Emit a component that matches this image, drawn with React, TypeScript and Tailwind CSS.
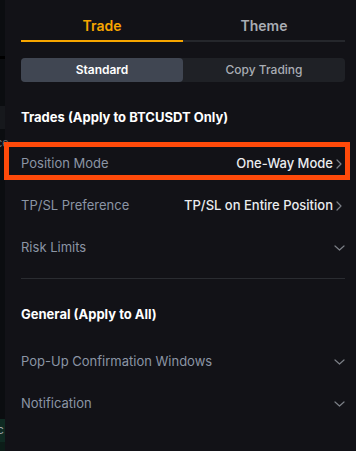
import React from "react";

const font = { fontFamily: "Inter, 'Noto Sans', Roboto, sans-serif" };

function ChevronRight() {
  return (
    <svg width="6" height="10" viewBox="0 0 6 10" fill="none" className="ml-[3px] mr-[3px]">
      <path d="M1 1l4 4-4 4" stroke="#7b7f86" strokeWidth="1.2" strokeLinecap="round" strokeLinejoin="round" />
    </svg>
  );
}

function ChevronDown() {
  return (
    <svg width="11" height="6" viewBox="0 0 11 6" fill="none">
      <path d="M1 1l4.5 4 4.5-4" stroke="#7b7f86" strokeWidth="1.2" strokeLinecap="round" strokeLinejoin="round" />
    </svg>
  );
}

function Row({ label, value, down }: { label: string; value?: string; down?: boolean }) {
  return (
    <div className="flex h-[42px] items-center justify-between">
      <span className="text-[13px] text-[#8b95a5]">{label}</span>
      {down ? (
        <ChevronDown />
      ) : (
        <span className="flex items-center text-[13px] font-medium text-[#eaecef]">
          {value}
          <ChevronRight />
        </span>
      )}
    </div>
  );
}

export default function App() {
  return (
    <div className="relative flex h-[451px] w-[356px] overflow-hidden bg-[#121217]" style={font}>
      {/* background page strip */}
      <div className="relative w-[5px] shrink-0 bg-[#0b0d10]">
        <div className="absolute left-0 top-[56px] h-[3px] w-full bg-[#000000]" />
        <div className="absolute left-0 top-[106px] h-[23px] w-full bg-[#16181c]" />
        <div className="absolute left-[-4px] top-[136px] text-[11px] leading-[14px] text-[#6b6f75]">ce</div>
        <div className="absolute left-0 top-[419px] h-[23px] w-full overflow-hidden bg-[#0f2a22]">
          <div className="absolute left-[-3px] top-[4px] text-[12px] leading-[14px] text-[#9aa0a6]">c</div>
        </div>
        <div className="absolute left-0 top-[442px] h-[9px] w-full bg-[#0c1d18]" />
      </div>

      {/* panel */}
      <div className="flex flex-1 flex-col pl-4 pr-[11px]">
        {/* tabs */}
        <div className="flex">
          <div className="flex flex-1 justify-center border-b-2 border-[#f7a600] pb-[5px] pt-[17px]">
            <span className="text-[14px] font-semibold leading-[18px] text-[#f7a600]">Trade</span>
          </div>
          <div className="flex flex-1 justify-center border-b-2 border-[#25272c] pb-[5px] pt-[17px]">
            <span className="text-[14px] font-semibold leading-[18px] text-[#a9adb4]">Theme</span>
          </div>
        </div>

        {/* segmented */}
        <div className="mt-[16px] flex h-[24px] rounded-[4px] bg-[#1f2126]">
          <div className="flex flex-1 items-center justify-center rounded-[4px] bg-[#404652] text-[12px] font-semibold text-[#ffffff]">
            Standard
          </div>
          <div className="flex flex-1 items-center justify-center text-[12px] font-medium text-[#a9adb4]">
            Copy Trading
          </div>
        </div>

        {/* section 1 */}
        <div className="mt-[18px] flex h-[36px] items-center text-[13px] font-bold text-[#ffffff]">
          Trades (Apply to BTCUSDT Only)
        </div>
        <div className="mt-[7px]">
          <Row label="Position Mode" value="One-Way Mode" />
          <Row label="TP/SL Preference" value="TP/SL on Entire Position" />
          <Row label="Risk Limits" down />
        </div>

        <div className="mt-[9px] h-px bg-[#2a2c31]" />

        <div className="mt-[18px] flex h-[36px] items-center text-[13px] font-bold text-[#ffffff]">
          General (Apply to All)
        </div>
        <div className="mt-[8px]">
          <Row label="Pop-Up Confirmation Windows" down />
          <Row label="Notification" down />
        </div>
      </div>

      {/* highlight annotation */}
      <div className="pointer-events-none absolute left-[4px] top-[142px] h-[38px] w-[346px] border-[5px] border-[#ff4a0a]" />
    </div>
  );
}
